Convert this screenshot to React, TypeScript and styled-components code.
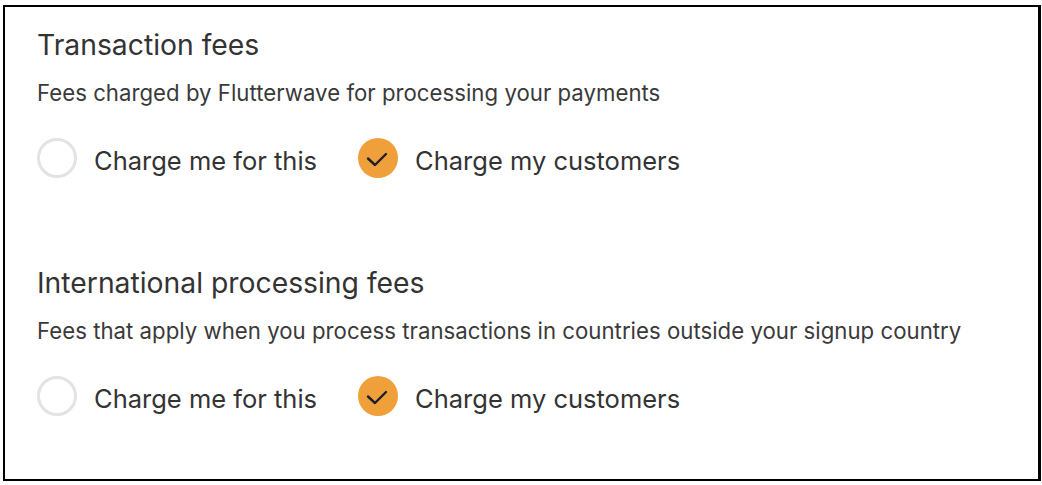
import React from "react";
import styled, { createGlobalStyle } from "styled-components";

const Global = createGlobalStyle`
  html, body { margin: 0; padding: 0; background: #fff; }
  body { font-family: Inter, "Noto Sans", sans-serif; color: #333; }
`;

const Card = styled.div`
  box-sizing: border-box;
  margin: 5px 0 0 3px;
  width: 1038px;
  height: 476px;
  border: 2px solid #000;
  border-right-width: 3px;
  padding: 22px 0 0 32px;
  display: flex;
  flex-direction: column;
  gap: 89px;
`;

const Section = styled.section`
  display: flex;
  flex-direction: column;
`;

const Title = styled.h2`
  margin: 0;
  font-size: 28.3px;
  line-height: 32px;
  font-weight: 400;
  color: #333;
`;

const Desc = styled.p`
  margin: 19px 0 0;
  font-size: 22.2px;
  line-height: 26px;
  letter-spacing: 0.02px;
  color: #3a3a3a;
`;

const Options = styled.div`
  display: flex;
  align-items: center;
  margin-top: 32px;
  gap: 41px;
`;

const Option = styled.label`
  display: flex;
  align-items: center;
  gap: 17px;
  font-size: 25.5px;
  color: #333;
`;

const OptionText = styled.span`
  box-sizing: border-box;
  height: 40px;
  line-height: 34px;
  padding-top: 6px;
`;

const Circle = styled.span<{ $checked?: boolean }>`
  box-sizing: border-box;
  flex: none;
  width: 40px;
  height: 40px;
  border-radius: 50%;
  display: flex;
  align-items: center;
  justify-content: center;
  background: ${(p) => (p.$checked ? "#f0a03a" : "#fff")};
  border: ${(p) => (p.$checked ? "none" : "3px solid #e3e3e3")};
`;

const Check = () => (
  <svg width="40" height="40" viewBox="0 0 40 40" fill="none">
    <path d="M10 20.5 L17 27 L28 16" stroke="#1f1f2a" strokeWidth="2.4" strokeLinecap="round" strokeLinejoin="round" />
  </svg>
);

const FeeSection = ({ title, desc }: { title: string; desc: string }) => (
  <Section>
    <Title>{title}</Title>
    <Desc>{desc}</Desc>
    <Options>
      <Option>
        <Circle />
        <OptionText>Charge me for this</OptionText>
      </Option>
      <Option>
        <Circle $checked>
          <Check />
        </Circle>
        <OptionText>Charge my customers</OptionText>
      </Option>
    </Options>
  </Section>
);

export default function App() {
  return (
    <>
      <Global />
      <Card>
        <FeeSection title="Transaction fees" desc="Fees charged by Flutterwave for processing your payments" />
        <FeeSection
          title="International processing fees"
          desc="Fees that apply when you process transactions in countries outside your signup country"
        />
      </Card>
    </>
  );
}
